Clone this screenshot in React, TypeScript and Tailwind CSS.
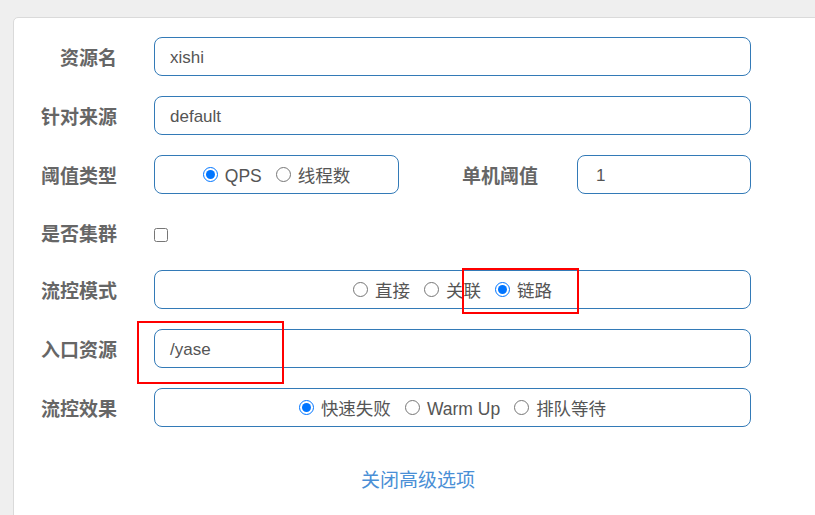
import React from "react";

const font = { fontFamily: '"Liberation Sans", "Noto Sans CJK SC", sans-serif' };

function Label({ children }: { children: React.ReactNode }) {
  return (
    <div className="w-[103px] shrink-0 pt-[6px] text-right text-[19px] font-bold text-[#666]">{children}</div>
  );
}

function Radio({ checked, label }: { checked?: boolean; label: string }) {
  return (
    <label className="flex items-center text-[17.5px] text-[#555]">
      <input
        type="radio"
        readOnly
        checked={!!checked}
        className="m-0 mr-[7px] h-[15px] w-[15px] accent-[#0075ff]"
      />
      <span className="pt-[4px]">{label}</span>
    </label>
  );
}

const box = "h-[39px] rounded-[8px] border border-[#337ab7] bg-white";
const field = "text-[17px] text-[#555] pt-[3px]";

export default function App() {
  return (
    <div className="min-h-[515px] w-[815px] overflow-hidden bg-[#efefef]" style={font}>
      <div className="relative ml-[13px] mt-[17px] w-[810px] rounded-tl-[5px] border border-[#dadada] bg-white pb-[40px] pt-[19px]">
        <div className="flex flex-col gap-[20px]">
          <div className="flex items-center">
            <Label>资源名</Label>
            <div className={`ml-[37px] flex w-[597px] items-center pl-[15px] ${field} ${box}`}>xishi</div>
          </div>
          <div className="flex items-center">
            <Label>针对来源</Label>
            <div className={`ml-[37px] flex w-[597px] items-center pl-[15px] ${field} ${box}`}>default</div>
          </div>
          <div className="flex items-center">
            <Label>阈值类型</Label>
            <div className={`ml-[37px] flex w-[245px] items-center justify-center gap-[14px] ${box}`}>
              <Radio checked label="QPS" />
              <Radio label="线程数" />
            </div>
            <div className="ml-[63px] pt-[6px] text-[19px] font-bold text-[#666]">单机阈值</div>
            <div className={`ml-[39px] flex w-[174px] items-center pl-[18px] ${field} ${box}`}>1</div>
          </div>
          <div className="flex h-[36px] items-center">
            <Label>是否集群</Label>
            <input type="checkbox" readOnly className="m-0 ml-[37px] mt-[5px] h-[14px] w-[14px]" />
          </div>
          <div className="flex items-center">
            <Label>流控模式</Label>
            <div className={`ml-[37px] flex w-[597px] items-center justify-center gap-[14px] ${box}`}>
              <Radio label="直接" />
              <Radio label="关联" />
              <Radio checked label="链路" />
            </div>
          </div>
          <div className="flex items-center">
            <Label>入口资源</Label>
            <div className={`ml-[37px] flex w-[597px] items-center pl-[15px] ${field} ${box}`}>/yase</div>
          </div>
          <div className="flex items-center">
            <Label>流控效果</Label>
            <div className={`ml-[37px] flex w-[597px] items-center justify-center gap-[14px] ${box}`}>
              <Radio checked label="快速失败" />
              <Radio label="Warm Up" />
              <Radio label="排队等待" />
            </div>
          </div>
        </div>
        <div className="mt-[40px] text-center text-[19px] text-[#4a8fd6]">关闭高级选项</div>

        <div className="pointer-events-none absolute left-[448px] top-[250px] h-[46px] w-[117px] border-2 border-[#ff0000]" />
        <div className="pointer-events-none absolute left-[123px] top-[303px] h-[63px] w-[147px] border-2 border-[#ff0000]" />
      </div>
    </div>
  );
}
